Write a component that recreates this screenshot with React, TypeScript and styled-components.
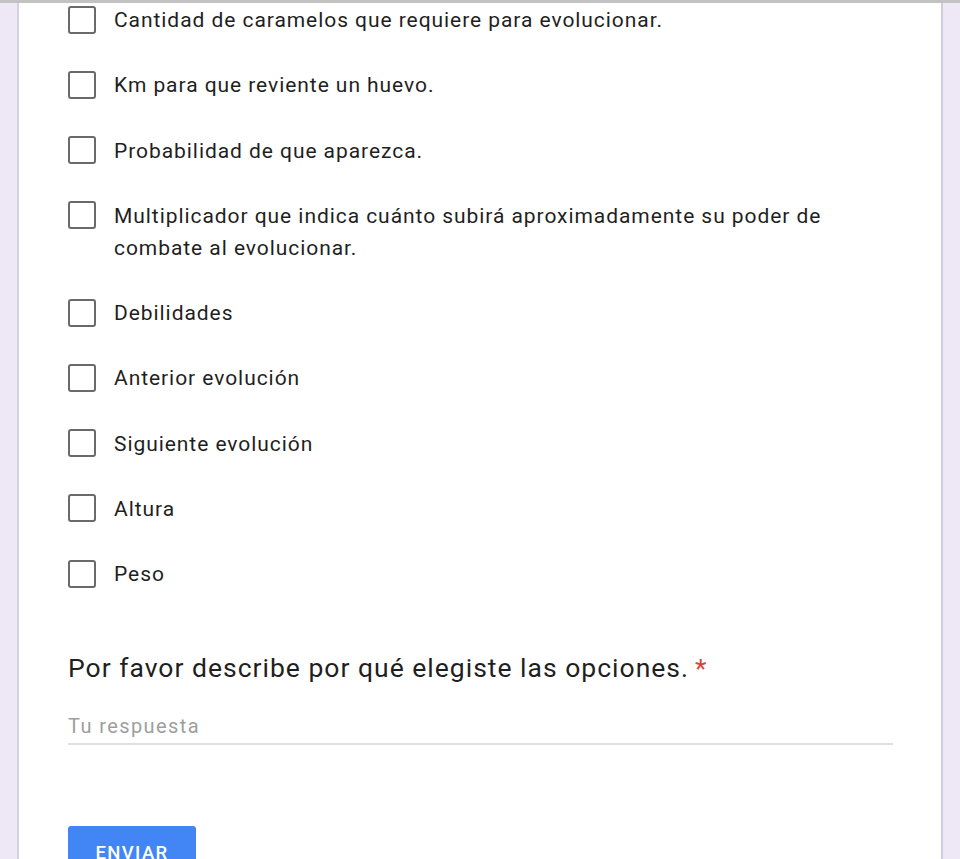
import React from "react";
import styled, { createGlobalStyle } from "styled-components";

const GlobalStyle = createGlobalStyle`
  html, body {
    margin: 0;
    padding: 0;
    background: #ede7f6;
    overflow: hidden;
  }
  body {
    font-family: Roboto, "Liberation Sans", Arial, sans-serif;
  }
`;

const TopEdge = styled.div`
  height: 3px;
  background: #c2c2c2;
`;

const Card = styled.main`
  margin: 0 17px 0 17px;
  background: #fff;
  border-left: 2px solid #d6cfe0;
  border-right: 2px solid #d3cbde;
  min-height: 856px;
  padding: 1px 0 0 49px;
  box-sizing: border-box;
`;

const OptionList = styled.ul`
  list-style: none;
  margin: 0;
  padding: 0;
  display: flex;
  flex-direction: column;
  gap: 33.25px;
`;

const Option = styled.li`
  display: flex;
  align-items: flex-start;
  gap: 18px;
`;

const Box = styled.span`
  flex: none;
  width: 24px;
  height: 24px;
  margin-top: 1.5px;
  border: 2.5px solid #6a6a6a;
  border-radius: 3px;
`;

const OptionText = styled.span`
  font-size: 21px;
  line-height: 32px;
  letter-spacing: 0.94px;
  color: #1f1f1f;
  max-width: 778px;
`;

const Question = styled.h2`
  margin: 62px 0 0;
  font-size: 26.5px;
  font-weight: 400;
  line-height: 32px;
  letter-spacing: 1px;
  color: #1f1f1f;
`;

const Required = styled.span`
  color: #db4437;
  margin-left: 6px;
`;

const Answer = styled.div`
  width: 825px;
  margin-top: 29px;
  border-bottom: 2px solid #e0e0e0;
  padding-bottom: 4px;
  font-size: 20px;
  line-height: 26px;
  letter-spacing: 1.4px;
  color: #9e9e9e;
`;

const SubmitButton = styled.button`
  margin-top: 81px;
  width: 128px;
  height: 50px;
  border: none;
  border-radius: 3px;
  background: #4285f4;
  color: #fff;
  font-family: Roboto, "Liberation Sans", Arial, sans-serif;
  font-size: 18.5px;
  font-weight: 500;
  letter-spacing: 1.4px;
  padding-top: 4px;
`;

const options = [
  "Cantidad de caramelos que requiere para evolucionar.",
  "Km para que reviente un huevo.",
  "Probabilidad de que aparezca.",
  "Multiplicador que indica cuánto subirá aproximadamente su poder de combate al evolucionar.",
  "Debilidades",
  "Anterior evolución",
  "Siguiente evolución",
  "Altura",
  "Peso",
];

export default function App() {
  return (
    <>
      <GlobalStyle />
      <TopEdge />
      <Card>
        <OptionList>
          {options.map((o) => (
            <Option key={o}>
              <Box />
              <OptionText>{o}</OptionText>
            </Option>
          ))}
        </OptionList>
        <Question>
          Por favor describe por qué elegiste las opciones.
          <Required>*</Required>
        </Question>
        <Answer>Tu respuesta</Answer>
        <SubmitButton>ENVIAR</SubmitButton>
      </Card>
    </>
  );
}
